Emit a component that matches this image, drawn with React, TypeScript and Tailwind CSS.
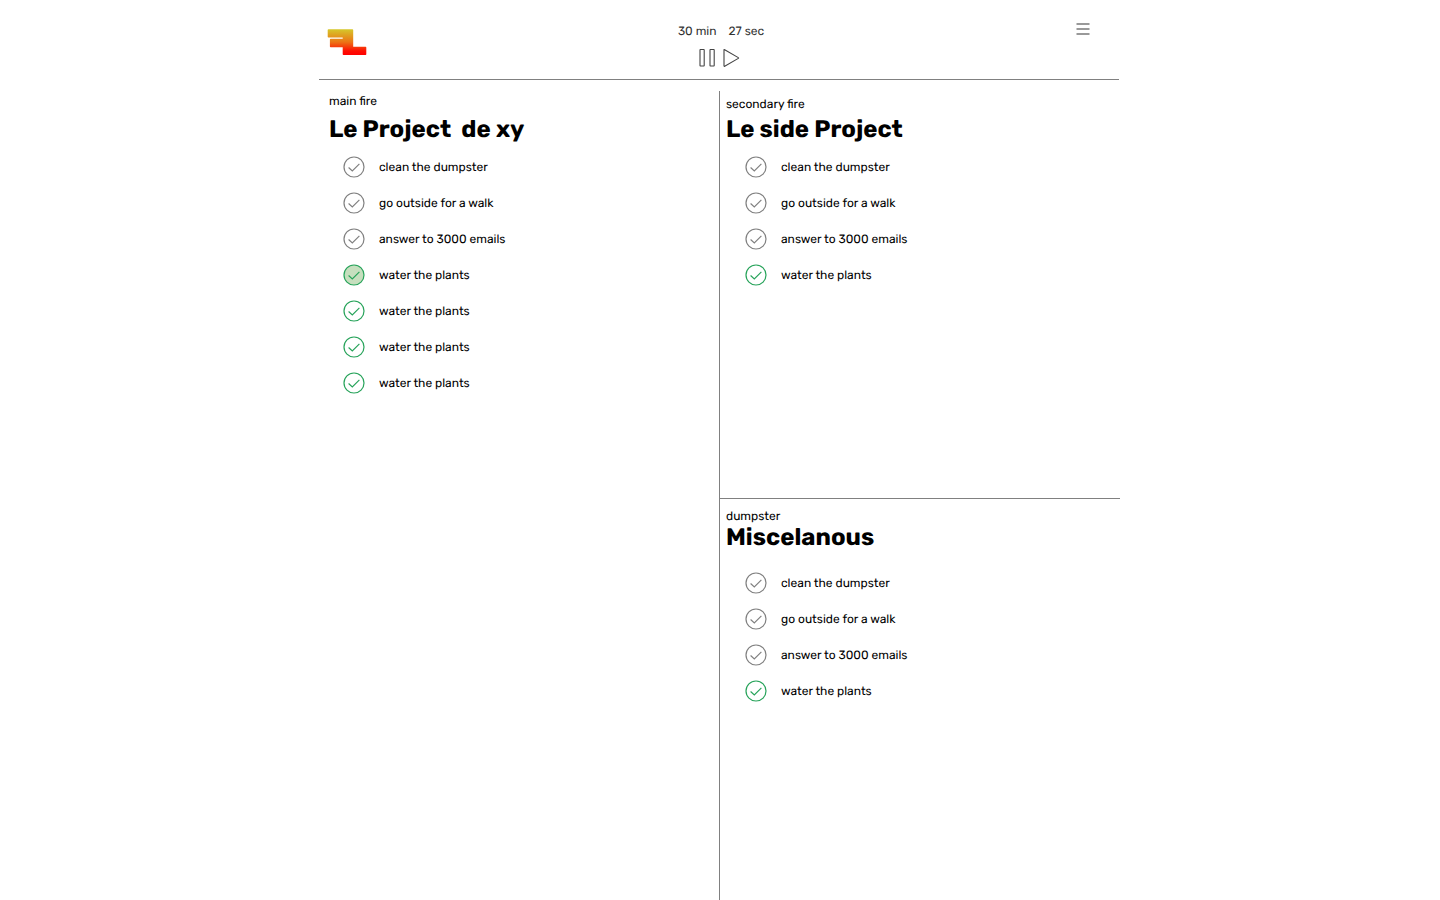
import React from "react";

type Tone = "pending" | "done" | "filled";
type Task = { label: string; tone: Tone };

const toneClass: Record<Tone, string> = {
  pending: "fill-none stroke-[#808080]",
  done: "fill-none stroke-[#27a35a]",
  filled: "fill-[#c6dfbe] stroke-[#27a35a]",
};

const baseTasks: Task[] = [
  { label: "clean the dumpster", tone: "pending" },
  { label: "go outside for a walk", tone: "pending" },
  { label: "answer to 3000 emails", tone: "pending" },
];
const sideTasks: Task[] = [...baseTasks, { label: "water the plants", tone: "done" }];
const mainTasks: Task[] = [
  ...baseTasks,
  { label: "water the plants", tone: "filled" },
  { label: "water the plants", tone: "done" },
  { label: "water the plants", tone: "done" },
  { label: "water the plants", tone: "done" },
];

function CheckIcon({ tone }: { tone: Tone }) {
  return (
    <svg width="22" height="22" viewBox="0 0 22 22" className="shrink-0">
      <circle cx="11" cy="11" r="10" strokeWidth="1.2" className={toneClass[tone]} />
      <path
        d="M5.6 11.500 9.300 15 16.400 7.800"
        strokeWidth="1.150"
        fill="none"
        className={tone === "pending" ? "stroke-[#808080]" : "stroke-[#27a35a]"}
      />
    </svg>
  );
}

function TaskList({ tasks }: { tasks: Task[] }) {
  return (
    <ul>
      {tasks.map((task, i) => (
        <li key={i} className="flex h-9 items-center gap-3.5">
          <CheckIcon tone={task.tone} />
          <span className="whitespace-pre text-xs">{task.label}</span>
        </li>
      ))}
    </ul>
  );
}

function Logo() {
  return (
    <svg width="40" height="28" viewBox="0 0 40 28">
      <defs>
        <linearGradient id="flame" x1="0" y1="1" x2="0" y2="27" gradientUnits="userSpaceOnUse">
          <stop offset="0" stopColor="#d5c92b" />
          <stop offset="0.5" stopColor="#ec7415" />
          <stop offset="0.85" stopColor="#fe0d02" />
          <stop offset="1" stopColor="#ff0000" />
        </linearGradient>
      </defs>
      <path
        d="M1.500 1.200H25.400q.8 0 .8.8V18.800H38.600q.7 0 .7.7v6.800q0 .8-.7.8H16.500q-.8 0-.8-.8V19.200H3.700q-.8 0-.8-.8V11.500q0-.7.8-.7H15.700V9.500H1.500q-.8 0-.8-.8V2q0-.8.800-.8Z"
        fill="url(#flame)"
      />
    </svg>
  );
}

export default function App() {
  return (
    <div className="flex h-[900px] justify-center overflow-hidden bg-white font-[Rubik,Roboto,sans-serif] text-black antialiased [text-rendering:geometricPrecision]">
      <div className="flex w-[802px] flex-col">
        <header className="flex h-20 w-[800px] items-start justify-between border-b border-[#808080] pl-2">
          <div className="w-[120px] pt-7">
            <Logo />
          </div>
          <div className="flex flex-col items-center pt-[23px] text-[#333]">
            <div className="flex gap-3 text-xs">
              <span>30 min</span>
              <span>27 sec</span>
            </div>
            <svg width="42" height="20" viewBox="0 0 42 20" className="mt-[9px] -ml-0.5" fill="none" stroke="#444" strokeWidth="1.100">
              <rect x="1" y="1.500" width="4.200" height="16.500" rx="0.400" />
              <rect x="11" y="1.500" width="4.200" height="16.500" rx="0.400" />
              <path d="M25 2v15.800q0 .8.7.4L39.300 10.400q.6-.4 0-.8L25.700 1.700q-.7-.4-.7.3Z" />
            </svg>
          </div>
          <div className="flex w-[124px] justify-end pt-[22px]">
            <svg width="43" height="14" viewBox="0 0 43 14" stroke="#999" strokeWidth="2">
              <path d="M.5 2h13M.5 7h13M.5 12h13" />
            </svg>
          </div>
        </header>

        <main className="flex flex-1">
          <section className="w-[400px] pl-2.5 pt-[13px]">
            <p className="text-xs">main fire</p>
            <h1 className="mt-0.5 mb-0.5 h-9 whitespace-pre text-2xl leading-9 font-bold">Le Project  de xy</h1>
            <div className="pl-3.5">
              <TaskList tasks={mainTasks} />
            </div>
          </section>
          <div className="mt-[11px] flex w-[401px] flex-col border-l border-[#808080]">
            <section className="h-[408px] border-b border-[#808080] pl-1.5 pt-[5px]">
              <p className="text-xs">secondary fire</p>
              <h2 className="-mt-px mb-0.5 h-9 text-2xl leading-9 font-bold">Le side Project</h2>
              <div className="pl-[19px]">
                <TaskList tasks={sideTasks} />
              </div>
            </section>
            <section className="pl-1.5 pt-[9px]">
              <p className="text-xs">dumpster</p>
              <h2 className="-mt-[5px] h-9 text-2xl leading-9 font-bold">Miscelanous</h2>
              <div className="pl-[19px] pt-2.5">
                <TaskList tasks={sideTasks} />
              </div>
            </section>
          </div>
        </main>
      </div>
    </div>
  );
}
